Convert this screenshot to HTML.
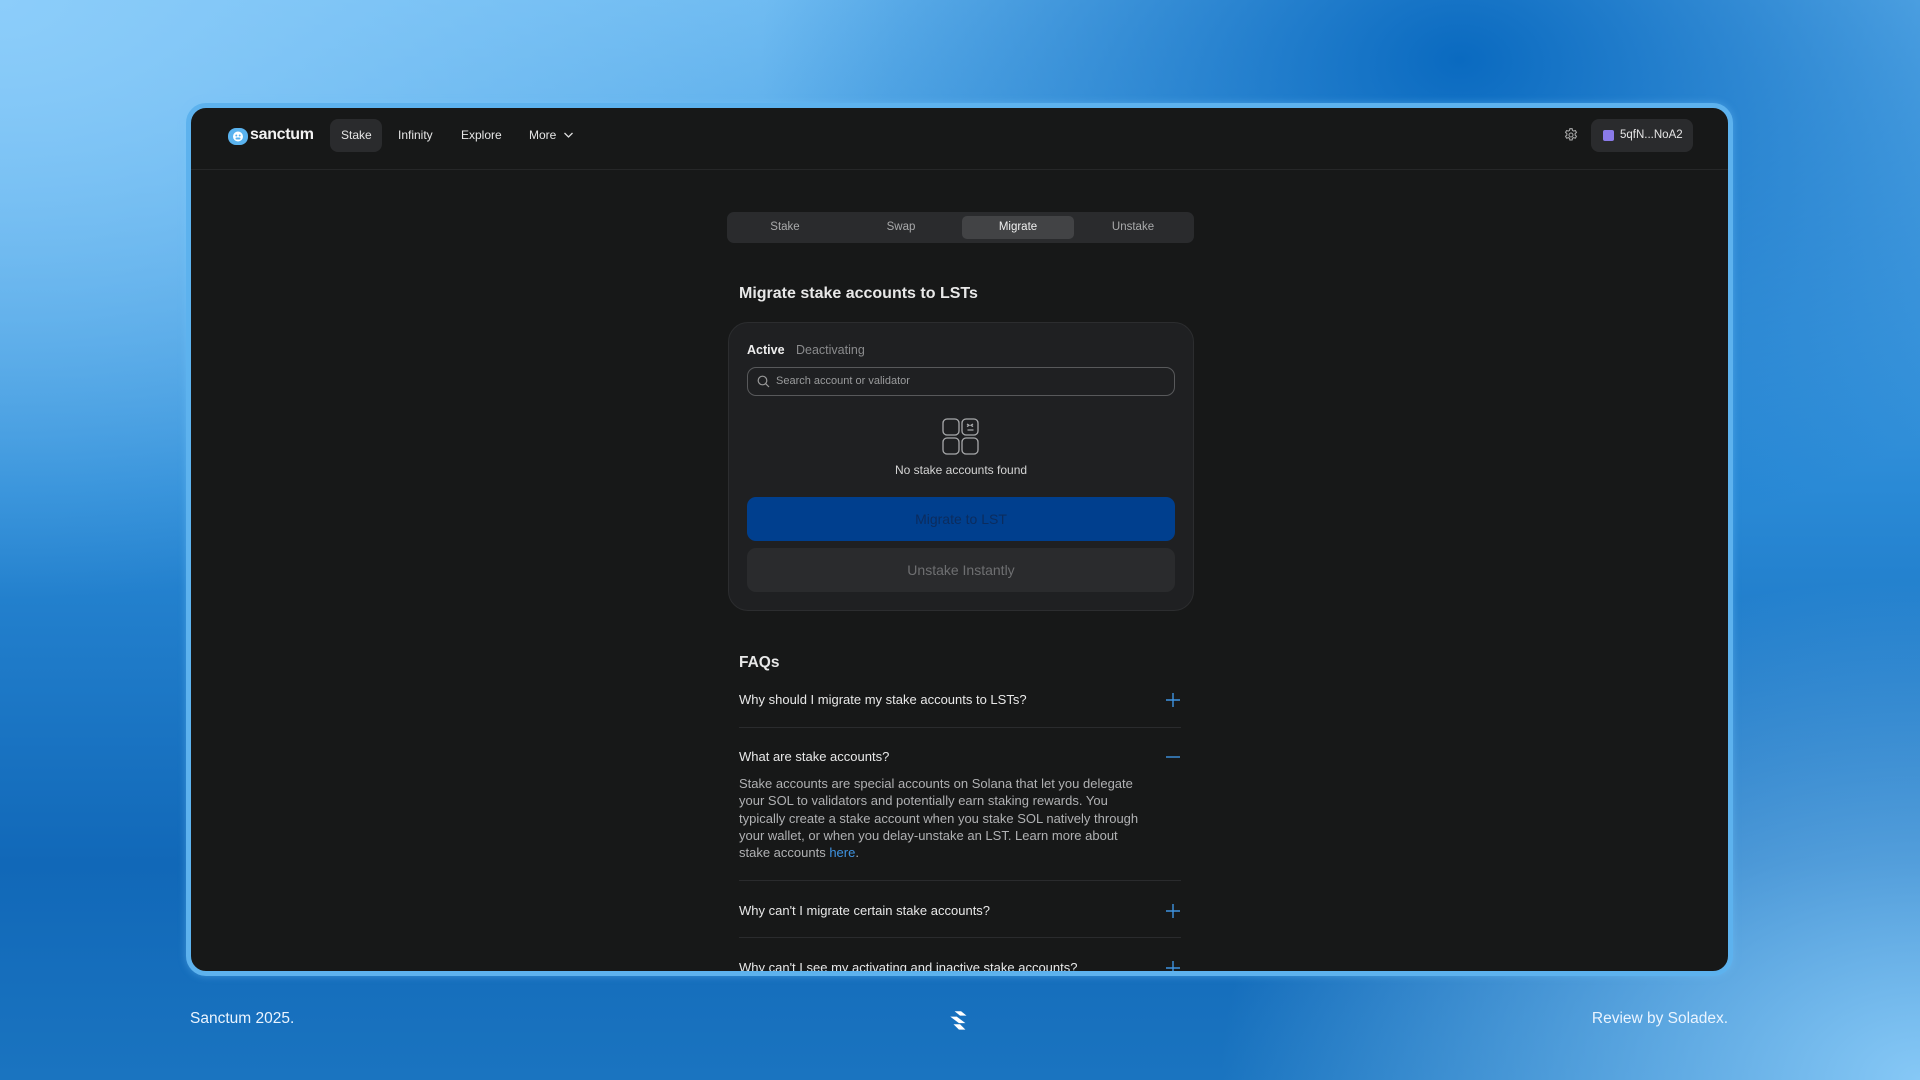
<!DOCTYPE html>
<html><head><meta charset="utf-8"><style>
*{box-sizing:border-box;margin:0;padding:0}
html,body{width:1920px;height:1080px;overflow:hidden}
body{font-family:"Liberation Sans",sans-serif;position:relative;
background:
radial-gradient(ellipse 700px 500px at 1460px 60px,#0a6ac0 0%,rgba(10,106,192,0) 100%),
radial-gradient(ellipse 700px 500px at 1920px 1080px,#86c8f6 0%,rgba(134,200,246,0) 100%),
radial-gradient(ellipse 900px 600px at 0px 0px,#8ccdfa 0%,rgba(140,205,250,0) 100%),
linear-gradient(180deg,#6ab8f0 0%,#2a8ad6 45%,#1168b8 80%,#1a74c0 100%);}
.frame{position:absolute;left:186px;top:103px;width:1547px;height:873px;border:5px solid #5db2ee;border-radius:20px;background:#171818;overflow:hidden;box-shadow:0 0 8px rgba(120,200,255,.4)}
.hdr{position:absolute;left:0;top:0;right:0;height:62px;border-bottom:1px solid #262728}
.abs{position:absolute}
.nav{font-size:12px;color:#e6e6e6}
.t{color:#e8e8e8}
.tabs{left:536px;top:104px;width:467px;height:31px;background:#2a2b2d;border-radius:7px}
.tab{position:absolute;top:0;height:31px;line-height:31px;font-size:11.5px;color:#a9aaab;text-align:center;width:116px}
.card{left:537px;top:214px;width:466px;height:289px;background:#1f2022;border:1px solid #2c2d2f;border-radius:20px}
.q{position:absolute;left:548px;font-size:13px;color:#e8e8e8}
.plus{position:absolute;left:975px;width:14px;height:14px}
.div{position:absolute;left:548px;width:442px;height:1px;background:#2a2b2d}
</style></head><body>
<div class="frame">
 <div class="hdr">
  <svg class="abs" style="left:37px;top:20px" width="20" height="17" viewBox="0 0 20 17"><rect x="0" y="0" width="20" height="17" rx="8" fill="#5ab3ef"/><circle cx="10" cy="8.5" r="5" fill="#fff"/><circle cx="8.3" cy="7.5" r="1" fill="#5ab3ef"/><circle cx="11.7" cy="7.5" r="1" fill="#5ab3ef"/><rect x="7.5" y="9.5" width="5" height="2" rx="1" fill="#5ab3ef"/></svg>
  <div class="abs" style="left:59px;top:18px;font-size:16px;font-weight:bold;color:#f2f2f2;letter-spacing:-.3px">sanctum</div>
  <div class="abs" style="left:139px;top:11px;width:52px;height:33px;background:#2a2b2d;border-radius:8px"></div>
  <div class="abs nav" style="left:150px;top:20px">Stake</div>
  <div class="abs nav" style="left:207px;top:20px">Infinity</div>
  <div class="abs nav" style="left:270px;top:20px">Explore</div>
  <div class="abs nav" style="left:338px;top:20px">More</div>
  <svg class="abs" style="left:372px;top:23px" width="11" height="8" viewBox="0 0 11 8"><path d="M1.5 2l4 4 4-4" stroke="#ddd" stroke-width="1.3" fill="none"/></svg>
  <svg class="abs" style="left:1372px;top:19px" width="16" height="16" viewBox="0 0 24 24" fill="none" stroke="#aaa" stroke-width="1.6"><circle cx="12" cy="12" r="3"/><path d="M10.3 2.5h3.4l.5 2.6 1.8 1 2.5-.9 1.7 2.9-2 1.7v2.4l2 1.7-1.7 2.9-2.5-.9-1.8 1-.5 2.6h-3.4l-.5-2.6-1.8-1-2.5.9-1.7-2.9 2-1.7v-2.4l-2-1.7 1.7-2.9 2.5.9 1.8-1z"/></svg>
  <div class="abs" style="left:1400px;top:11px;width:102px;height:33px;background:#2a2b2d;border-radius:8px"></div>
  <div class="abs" style="left:1412px;top:22px;width:11px;height:11px;background:#8a7ae8;border-radius:2px"></div>
  <div class="abs nav" style="left:1429px;top:21px;font-size:11.5px">5qfN...NoA2</div>
 </div>
 <div class="abs tabs">
  <div class="tab" style="left:0">Stake</div>
  <div class="tab" style="left:116px">Swap</div>
  <div class="tab" style="left:235px;top:4px;height:23px;line-height:23px;width:112px;background:#424345;border-radius:5px;color:#f0f0f0">Migrate</div>
  <div class="tab" style="left:348px">Unstake</div>
 </div>
 <div class="abs t" style="left:548px;top:177px;font-size:16px;font-weight:bold">Migrate stake accounts to LSTs</div>
 <div class="abs card">
  <div class="abs" style="left:18px;top:20px;font-size:12.5px;font-weight:bold;color:#eee">Active</div>
  <div class="abs" style="left:67px;top:20px;font-size:12.5px;color:#8a8b8d">Deactivating</div>
  <div class="abs" style="left:18px;top:44px;width:428px;height:29px;border:1px solid #58595b;border-radius:9px"></div>
  <svg class="abs" style="left:28px;top:52px" width="13" height="13" viewBox="0 0 13 13" fill="none" stroke="#999" stroke-width="1.2"><circle cx="5.5" cy="5.5" r="4.3"/><path d="M8.7 8.7l3.3 3.3"/></svg>
  <div class="abs" style="left:47px;top:52px;font-size:11px;color:#9a9b9c">Search account or validator</div>
  <svg class="abs" style="left:213px;top:95px" width="37" height="37" viewBox="0 0 37 37" fill="none" stroke="#a8a9ab" stroke-width="1.3"><rect x="1" y="1" width="16" height="16" rx="4"/><rect x="20" y="1" width="16" height="16" rx="4"/><rect x="1" y="20" width="16" height="16" rx="4"/><rect x="20" y="20" width="16" height="16" rx="4"/><path d="M25 6l2 1.3-2 1.3M31 6l-2 1.3 2 1.3M25.5 12h6"/></svg>
  <div class="abs" style="left:0;width:464px;top:140px;text-align:center;font-size:12px;color:#d4d4d4">No stake accounts found</div>
  <div class="abs" style="left:18px;top:174px;width:428px;height:44px;background:#003f8e;border-radius:9px;text-align:center;line-height:44px;font-size:14px;color:#0b2c5e">Migrate to LST</div>
  <div class="abs" style="left:18px;top:225px;width:428px;height:44px;background:#2a2b2d;border-radius:9px;text-align:center;line-height:44px;font-size:14px;color:#6e6f71">Unstake Instantly</div>
 </div>
 <div class="abs t" style="left:548px;top:546px;font-size:15.5px;font-weight:bold">FAQs</div>
 <div class="q" style="top:584px">Why should I migrate my stake accounts to LSTs?</div>
 <svg class="plus" style="top:585px" viewBox="0 0 14 14"><path d="M7 0v14M0 7h14" stroke="#3f93e0" stroke-width="1.4"/></svg>
 <div class="div" style="top:619px"></div>
 <div class="q" style="top:641px">What are stake accounts?</div>
 <svg class="plus" style="top:642px" viewBox="0 0 14 14"><path d="M0 7h14" stroke="#3f93e0" stroke-width="1.4"/></svg>
 <div class="abs" style="left:548px;top:667px;width:400px;font-size:13px;line-height:17.3px;color:#b0b1b3">Stake accounts are special accounts on Solana that let you delegate your SOL to validators and potentially earn staking rewards. You typically create a stake account when you stake SOL natively through your wallet, or when you delay-unstake an LST. Learn more about stake accounts <span style="color:#3f93e0">here</span>.</div>
 <div class="div" style="top:772px"></div>
 <div class="q" style="top:795px">Why can't I migrate certain stake accounts?</div>
 <svg class="plus" style="top:796px" viewBox="0 0 14 14"><path d="M7 0v14M0 7h14" stroke="#3f93e0" stroke-width="1.4"/></svg>
 <div class="div" style="top:829px"></div>
 <div class="q" style="top:852px">Why can't I see my activating and inactive stake accounts?</div>
 <svg class="plus" style="top:853px" viewBox="0 0 14 14"><path d="M7 0v14M0 7h14" stroke="#3f93e0" stroke-width="1.4"/></svg>
</div>
<div class="abs" style="left:190px;top:1010px;font-size:15.5px;color:#eaf4ff">Sanctum 2025.</div>
<div class="abs" style="right:192px;top:1010px;font-size:15.5px;color:#eaf4ff">Review by Soladex.</div>
<svg class="abs" style="left:947px;top:1008px" width="26" height="26" viewBox="0 0 24 24" fill="#fff"><path d="M7 3l6 0 5 4-6 0z"/><path d="M3 8l6 0 8 6-6 0z"/><path d="M6 15l6 0 5 5-6 0z"/></svg>
</body></html>
